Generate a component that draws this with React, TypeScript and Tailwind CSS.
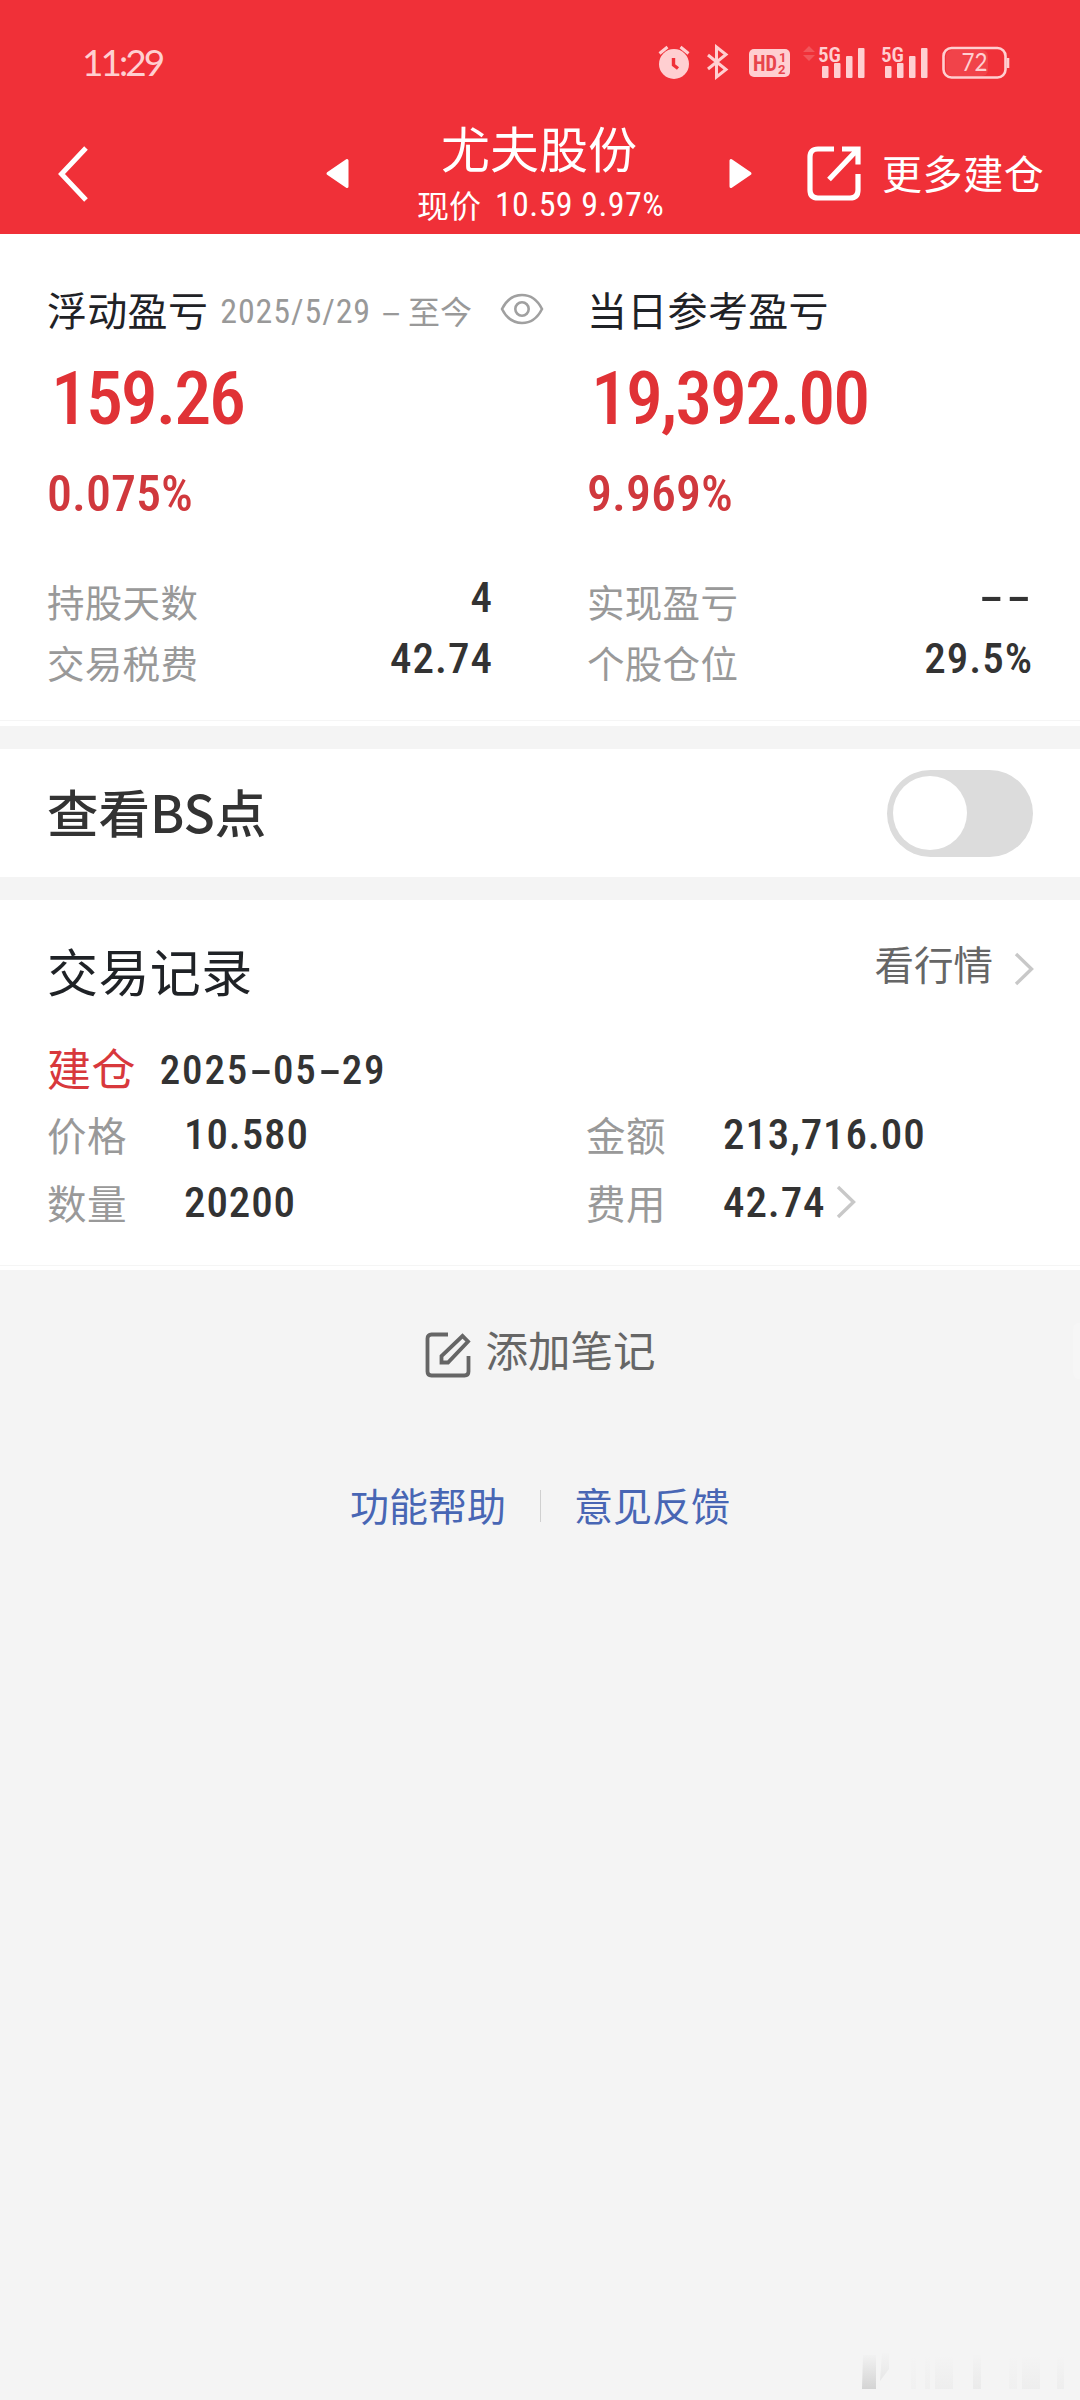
import { useState } from 'react'
import type { ReactNode } from 'react'
import clsx from 'clsx'

const SUMMARY = [
  {
    title: '浮动盈亏',
    range: true,
    amount: '159.26',
    percent: '0.075%',
    rows: [
      { label: '持股天数', value: '4' },
      { label: '交易税费', value: '42.74' },
    ],
  },
  {
    title: '当日参考盈亏',
    range: false,
    amount: '19,392.00',
    percent: '9.969%',
    rows: [
      { label: '实现盈亏', value: '--' },
      { label: '个股仓位', value: '29.5%' },
    ],
  },
]

const RECORD = [
  { label: '价格', value: '10.580' },
  { label: '金额', value: '213,716.00' },
  { label: '数量', value: '20200' },
  { label: '费用', value: '42.74', link: true },
]

function Num({ className, children }: { className?: string; children: ReactNode }) {
  return <span className={clsx("font-['Roboto_Condensed',sans-serif] whitespace-nowrap", className)}>{children}</span>
}

// The number font's hyphen is too short for dates and empty values
function Dash({ className }: { className?: string }) {
  return <span className={clsx('inline-block scale-x-[1.9] text-center tracking-normal', className)}>-</span>
}

function Chevron() {
  return (
    <svg className="h-[34px] w-5" viewBox="0 0 20 34" fill="none" stroke="#c8c8c8" strokeWidth="3.4">
      <path d="M2 2l15.5 15L2 32" />
    </svg>
  )
}

function Signal() {
  return (
    <svg className="h-9 w-[48px]" viewBox="0 0 48 36" fill="#ffcfd1">
      <text x="0" y="18" fontSize="21" fontWeight="600" textLength="23" lengthAdjust="spacingAndGlyphs" className="font-['Roboto_Condensed',sans-serif]">
        5G
      </text>
      <rect x="4" y="22" width="6.5" height="12" rx="1" />
      <rect x="16" y="19" width="6.5" height="15" rx="1" />
      <rect x="28" y="12" width="6.5" height="22" rx="1" />
      <rect x="40" y="4" width="6.5" height="30" rx="1" />
    </svg>
  )
}

function StatusBar() {
  return (
    <div className="flex h-[124px] items-center pr-[70px] pl-[82px]">
      <span className="pb-px font-['Lato',sans-serif] text-[37px] leading-10 tracking-[-3px] text-[#ffcfd1]">11:29</span>
      <div className="ml-auto flex items-center">
        {/* alarm */}
        <svg className="h-9 w-8" viewBox="0 0 32 36" fill="none">
          <circle cx="16" cy="20" r="15" fill="#ffcfd1" />
          <path d="M1.5 9.5L9.5 3M30.5 9.5L22.5 3" stroke="#ffcfd1" strokeWidth="3" />
          <path d="M15.5 14v7l4.5 3.5" stroke="#f03038" strokeWidth="3.4" />
        </svg>
        {/* bluetooth */}
        <svg className="ml-4 h-9 w-[23px]" viewBox="0 0 23 36" fill="none" stroke="#ffcfd1" strokeWidth="3">
          <path d="M2 11l18 14.5L10.5 33V3L20 10.5 2 25" />
        </svg>
        {/* HD */}
        <svg className="ml-[20px] h-9 w-[41px]" viewBox="0 0 41 36" fill="#e8454c">
          <rect y="5" width="41" height="28" rx="5" fill="#ffcfd1" />
          <text x="4" y="27" fontSize="22" fontWeight="700" textLength="24" lengthAdjust="spacingAndGlyphs" className="font-['Roboto_Condensed',sans-serif]">
            HD
          </text>
          <text x="30" y="18" fontSize="13" fontWeight="700" className="font-['Roboto',sans-serif]">1</text>
          <text x="29" y="30" fontSize="13" fontWeight="700" className="font-['Roboto',sans-serif]">2</text>
        </svg>
        {/* data traffic */}
        <svg className="mr-[3px] ml-[13px] h-9 w-3" viewBox="0 0 12 36" fill="#f2555b">
          <path d="M0 8l6-6 6 6zM0 11h12l-6 6z" />
        </svg>
        <Signal />
        <span className="w-[15px]" />
        <Signal />
        {/* battery */}
        <svg className="ml-[13px] h-9 w-[68px]" viewBox="0 0 68 36" fill="none">
          <rect x="4" y="6" width="42" height="26" rx="6" fill="#f2555b" opacity="0.5" />
          <rect x="1.5" y="4" width="62" height="29.5" rx="8" stroke="#ffcfd1" strokeWidth="2.6" />
          <path d="M66 14v10" stroke="#ffcfd1" strokeWidth="2.6" />
          <text x="19.5" y="27" fontSize="25" textLength="26" lengthAdjust="spacingAndGlyphs" fill="#ffcfd1" className="font-['Lato',sans-serif]">
            72
          </text>
        </svg>
      </div>
    </div>
  )
}

function NavBar() {
  return (
    <div className="flex h-[99px] items-center pl-[57px] text-white">
      <svg className="h-14 w-8" viewBox="0 0 32 56" fill="none" stroke="currentColor" strokeWidth="5">
        <path d="M29 2L4.5 28 29 54" />
      </svg>
      <svg className="ml-[236px] h-8 w-6" viewBox="0 0 24 32" fill="currentColor" stroke="currentColor" strokeWidth="3" strokeLinejoin="round">
        <path d="M22 2.5v26L3 15.5z" />
      </svg>
      <div className="flex w-[380px] flex-col items-center self-start">
        <h1 className="h-[45px] text-[49px] leading-[45px]">尤夫股份</h1>
        <p className="mt-[14px] flex h-[42px] items-center pl-[3px] text-[32px] leading-[42px]">
          现价
          <Num className="ml-[14px] text-[34px] tracking-[0.4px]">10.59 9.97%</Num>
        </p>
      </div>
      <svg className="h-8 w-6" viewBox="0 0 24 32" fill="currentColor" stroke="currentColor" strokeWidth="3" strokeLinejoin="round">
        <path d="M2 2.5v26L21 15.5z" />
      </svg>
      <svg className="ml-[54px] h-14 w-[54px]" viewBox="0 0 54 56" fill="none" stroke="currentColor" strokeWidth="5.2">
        <path d="M27 3H11q-8 0-8 8V44q0 8 8 8h32q8 0 8-8V28" />
        <path d="M35 3h16V18.5M51 3L22 33.5" />
      </svg>
      <span className="ml-[21px] pb-1 text-[40px] leading-[48px] tracking-[0.6px]">更多建仓</span>
    </div>
  )
}

export default function App() {
  const [showBs, setShowBs] = useState(false)

  return (
    <div className="relative flex min-h-[2400px] w-[1080px] flex-col bg-[#f4f4f4] font-['Noto_Sans_CJK_SC',sans-serif] text-[#333]">
      <header className="h-[234px] bg-[#f03038]">
        <StatusBar />
        <NavBar />
      </header>

      <section className="h-[492px] bg-white">
        <div className="flex h-[487px] border-b border-[#f5f5f5] pt-[49px] pl-[47px]">
          {SUMMARY.map((s) => (
            <div key={s.title} className="w-[540px] shrink-0">
              <div className="flex h-[52px] items-center">
                <h2 className="text-[40px] leading-[52px] tracking-[0.3px] text-[#1f2226]">{s.title}</h2>
                {s.range && (
                  <>
                    <span className="ml-3 flex items-center pt-[2px] text-[32px] leading-[48px] text-[#999]">
                      <Num className="pt-[2px] text-[34px] tracking-[0.9px]">2025/5/29</Num>
                      <Dash className="mb-[3px] ml-[12px] w-4" />
                      <span className="ml-[9px]">至今</span>
                    </span>
                    <svg className="ml-[28px] h-8 w-11" viewBox="0 0 44 32" fill="none" stroke="#a0a0a0" strokeWidth="2.6">
                      <path d="M2 16C6 8 13 2 22 2s16 6 20 14c-4 8-11 14-20 14S6 24 2 16z" />
                      <circle cx="22" cy="16" r="6.7" />
                    </svg>
                  </>
                )}
              </div>
              <Num className="mt-6 block pl-1 text-[74px] leading-[80px] font-medium tracking-[-2.1px] text-[#e03236]">{s.amount}</Num>
              <Num className="mt-[25px] block text-[50px] leading-[60px] font-medium text-[#d0383d]">{s.percent}</Num>
              <div className="mt-[46px] w-[446px]">
                {s.rows.map((r) => (
                  <div key={r.label} className="flex h-[61px] items-center justify-between">
                    <span className="text-[37.5px] leading-[60px] tracking-[0.3px] text-[#999]">{r.label}</span>
                    <Num className="pb-2 text-[43px] leading-[52px] font-medium tracking-[1px]">
                      {r.value === '--' ? (
                        <>
                          <Dash className="w-[27px]" />
                          <Dash className="w-[28px]" />
                        </>
                      ) : (
                        r.value
                      )}
                    </Num>
                  </div>
                ))}
              </div>
            </div>
          ))}
        </div>
      </section>

      <section className="mt-[23px] flex h-[128px] items-center justify-between bg-white pr-[47px] pl-[47px]">
        <span className="pb-[5px] text-[51.5px] leading-[60px] font-medium">查看BS点</span>
        <button
          className={clsx('flex h-[87px] w-[146px] items-center rounded-full px-[6px]', showBs ? 'justify-end bg-[#f03038]' : 'bg-[#dcdcdc]')}
          onClick={() => setShowBs(!showBs)}
        >
          <span className="size-[74px] rounded-full bg-white" />
        </button>
      </section>

      <section className="mt-[23px] h-[370px] bg-white">
        <div className="h-[366px] border-b border-[#f5f5f5] pt-[39px] pl-[47px]">
          <div className="flex h-[60px] items-center pr-[46px]">
            <h2 className="pt-px text-[51px] leading-[60px] tracking-[0.4px] text-[#1f2226]">交易记录</h2>
            <span className="mr-[21px] ml-auto pb-3 text-[39.5px] leading-[48px] text-[#666]">看行情</span>
            <Chevron />
          </div>
          <div className="mt-[38px] flex h-[60px] items-center">
            <span className="text-[44px] leading-[60px] tracking-[0.4px] text-[#d8383c]">建仓</span>
            <Num className="ml-[24px] pt-[6px] text-[41px] leading-[56px] font-medium tracking-[1.8px]">
              2025
              <Dash className="w-6" />
              05
              <Dash className="w-6" />
              29
            </Num>
          </div>
          <div className="mt-[3px] grid grid-cols-[539px_1fr]">
            {RECORD.map((r) => (
              <div key={r.label} className="flex h-[68px] items-center">
                <span className="w-[137px] text-[39.5px] leading-[60px] tracking-[0.4px] text-[#999]">{r.label}</span>
                <Num className="mr-[11px] text-[43px] leading-[52px] font-medium tracking-[0.9px]">{r.value}</Num>
                {r.link && <Chevron />}
              </div>
            ))}
          </div>
        </div>
      </section>

      <div className="mt-[51px] flex h-[60px] items-center justify-center pl-px text-[42.5px] leading-[56px] text-[#666]">
        <svg className="mt-2 mr-[14px] size-[46px]" viewBox="0 0 46 46" fill="none" stroke="currentColor" strokeWidth="3.8">
          <path d="M23 2.5H6.5q-4 0-4 4v33q0 4 4 4h33q4 0 4-4V24" />
          <path d="M16.5 30.5V24L37.5 4l5.5 5.5L23 30.5z" />
        </svg>
        <span className="pb-1">添加笔记</span>
      </div>

      <div className="mt-[93px] flex h-[60px] items-center justify-center text-[39px] leading-[60px] text-[#4866b4]">
        <a>功能帮助</a>
        <span className="mx-[33.5px] mt-1 h-8 w-px bg-[#d0d0d0]" />
        <a>意见反馈</a>
      </div>

      {/* pull tab on the screen edge */}
      <span className="absolute top-[1323px] right-0 h-14 w-[7px] rounded-l-md bg-[#f6f6f6]" />

      <svg className="mt-auto mr-4 mb-[11px] ml-auto h-9 w-[204px]" viewBox="0 0 204 36">
        <defs>
          <linearGradient id="fade" x1="0" y1="0" x2="0" y2="1">
            <stop offset="0" stopColor="#888" stopOpacity="0.02" />
            <stop offset="1" stopColor="#888" stopOpacity="0.3" />
          </linearGradient>
        </defs>
        <g fill="url(#fade)">
          <path d="M3 2h13v34H2z" />
          <path d="M22 0h7v16l-9 12z" opacity="0.4" />
          <rect x="51" y="4" width="5" height="32" opacity="0.1" />
          <rect x="65" y="4" width="5" height="32" opacity="0.14" />
          <rect x="75" y="4" width="18" height="32" opacity="0.2" />
          <rect x="113" y="2" width="8" height="34" opacity="0.3" />
          <rect x="149" y="4" width="8" height="32" opacity="0.12" />
          <rect x="162" y="4" width="18" height="32" opacity="0.2" />
          <rect x="197" y="4" width="7" height="32" opacity="0.2" />
        </g>
      </svg>
    </div>
  )
}
